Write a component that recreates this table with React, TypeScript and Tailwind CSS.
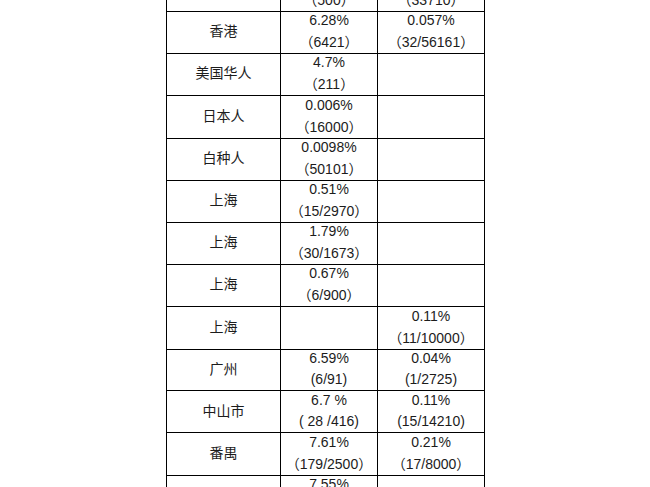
import React from "react";

type Row = {
  place: string;
  a: string[];
  b: string[];
  h: string;
};

// row heights include the 1px bottom rule
const rows: Row[] = [
  { place: "台湾", a: ["0.6%", "（500）"], b: ["0.03%", "（33710）"], h: "h-[42px]" },
  { place: "香港", a: ["6.28%", "（6421）"], b: ["0.057%", "（32/56161）"], h: "h-[42px]" },
  { place: "美国华人", a: ["4.7%", "（211）"], b: [], h: "h-[43px]" },
  { place: "日本人", a: ["0.006%", "（16000）"], b: [], h: "h-[42px]" },
  { place: "白种人", a: ["0.0098%", "（50101）"], b: [], h: "h-[42px]" },
  { place: "上海", a: ["0.51%", "（15/2970）"], b: [], h: "h-[42px]" },
  { place: "上海", a: ["1.79%", "（30/1673）"], b: [], h: "h-[42px]" },
  { place: "上海", a: ["0.67%", "（6/900）"], b: [], h: "h-[43px]" },
  { place: "上海", a: [], b: ["0.11%", "（11/10000）"], h: "h-[42px]" },
  { place: "广州", a: ["6.59%", "(6/91)"], b: ["0.04%", "(1/2725)"], h: "h-[42px]" },
  { place: "中山市", a: ["6.7 %", "( 28 /416)"], b: ["0.11%", "(15/14210)"], h: "h-[42px]" },
  { place: "番禺", a: ["7.61%", "（179/2500）"], b: ["0.21%", "（17/8000）"], h: "h-[42px]" },
  { place: "顺德", a: ["7.55%", "（151/2000）"], b: [], h: "h-[42px]" },
];

function Line({ text }: { text: string }) {
  const parts = text.split(/([（）])/).filter((p) => p !== "");
  return (
    <span className="whitespace-pre">
      {parts.map((p, i) =>
        p === "（" || p === "）" ? (
          <span key={i} className="inline-block w-[14px] font-['Noto_Sans_CJK_SC',sans-serif] text-center">
            {p}
          </span>
        ) : (
          <span key={i}>{p}</span>
        )
      )}
    </span>
  );
}

function Cell({ lines }: { lines: string[] }) {
  return (
    <div className="flex flex-col items-center justify-center border-r border-b border-black">
      {lines.map((l, i) => (
        <Line key={i} text={l} />
      ))}
    </div>
  );
}

export default function App() {
  return (
    <div className="min-h-screen bg-white overflow-hidden">
      <div className="-mt-[33px] ml-[166px] w-[319px] border-t border-l border-black font-['Liberation_Sans','Noto_Sans_CJK_SC',sans-serif] text-[14px] leading-[21px] text-[#1c1c1c]">
        {rows.map((r, i) => (
          <div key={i} className={`grid grid-cols-[114px_97px_107px] ${r.h}`}>
            <Cell lines={[r.place]} />
            <Cell lines={r.a} />
            <Cell lines={r.b} />
          </div>
        ))}
      </div>
    </div>
  );
}
